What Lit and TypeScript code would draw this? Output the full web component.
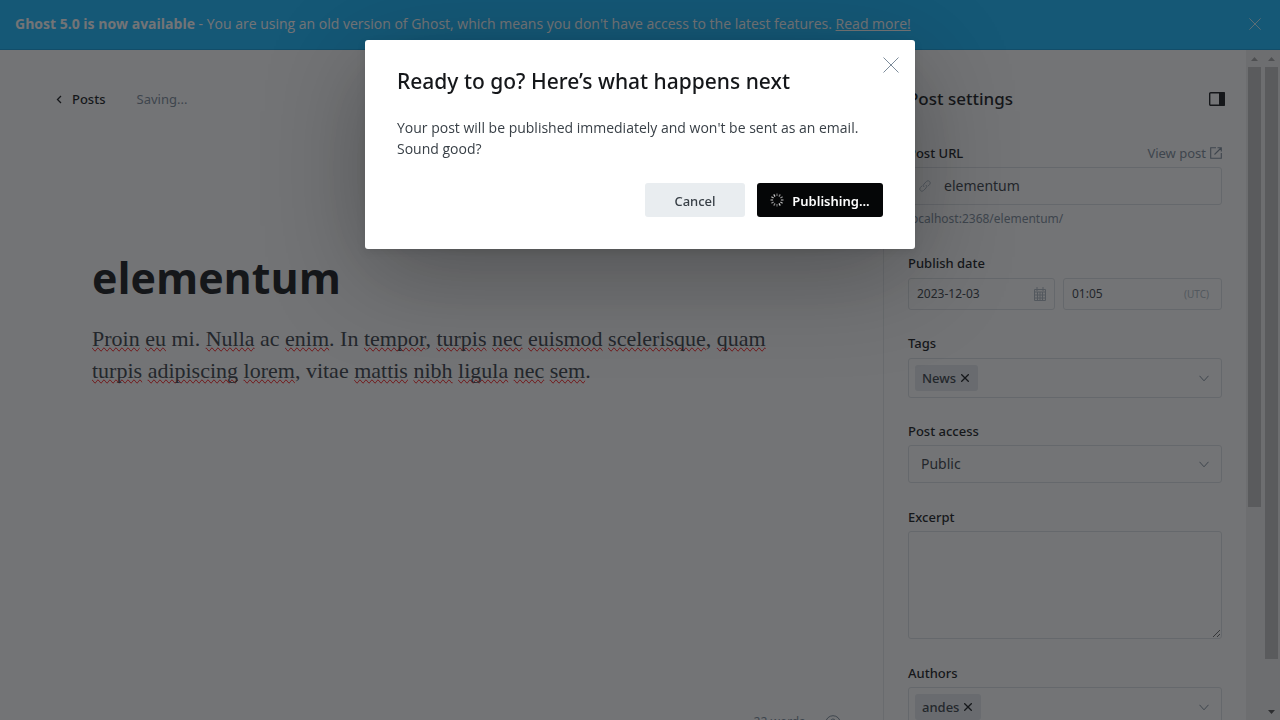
import { LitElement, html, css, svg } from "lit";
import { customElement, state } from "lit/decorators.js";

interface Run {
  text: string;
  flagged: boolean;
}

const run = (text: string, flagged = true): Run => ({ text, flagged });

const BODY: Run[] = [
  run("Proin"), run(" ", false), run("eu"), run(" mi. ", false), run("Nulla"), run(" ac ", false),
  run("enim"), run(". In ", false), run("tempor"), run(", ", false), run("turpis"), run(" ", false),
  run("nec"), run(" ", false), run("euismod"), run(" ", false), run("scelerisque"), run(", ", false),
  run("quam"), run(" ", false), run("turpis"), run(" ", false), run("adipiscing"), run(" ", false),
  run("lorem"), run(", vitae ", false), run("mattis"), run(" ", false), run("nibh"), run(" ", false),
  run("ligula"), run(" ", false), run("nec"), run(" ", false), run("sem"), run(".", false),
];

const crossIcon = html`<svg class="cross" viewBox="0 0 16 16" aria-hidden="true"><path d="M.5.5l15 15M15.5.5l-15 15" /></svg>`;
const chevronDown = html`<svg class="chevron-down" viewBox="0 0 10 7" aria-hidden="true"><path d="M.5.8L5 5.8 9.5.8" /></svg>`;

@customElement("app-root")
export class AppRoot extends LitElement {
  static styles = css`
    :host {
      display: flex;
      flex-direction: column;
      height: 100vh;
      overflow: hidden;
      background: #fff;
      color: #15171a;
      font: 14px/20px "Noto Sans", "Open Sans", sans-serif;
    }
    * { box-sizing: border-box; }
    svg { display: block; fill: none; stroke: currentColor; flex: none; }
    button, input, select, textarea { font: inherit; color: inherit; margin: 0; }
    button { border: 0; padding: 0; background: none; cursor: pointer; }

    .banner {
      display: flex;
      align-items: center;
      justify-content: space-between;
      flex: none;
      height: 50px;
      padding: 0 19px 2px 15px;
      background: #14b8ff;
      border-bottom: 1px solid #0d9fdf;
      color: #fff;
      font-family: "Open Sans", sans-serif;
      font-size: 14px;
    }
    .banner p { margin: 0; }
    .banner a { color: inherit; }
    .banner .cross { width: 12px; height: 12px; }

    .workspace { display: flex; flex: 1; min-height: 0; }
    .editor { display: flex; flex-direction: column; flex: 1; min-width: 0; }
    .editor-bar {
      display: flex;
      align-items: center;
      gap: 31px;
      height: 98px;
      padding: 0 56px;
      font-size: 13px;
      color: #7c8b9a;
      flex: none;
    }
    .back {
      display: flex;
      align-items: center;
      gap: 9px;
      color: #15171a;
      text-decoration: none;
      font-weight: 500;
    }
    .back svg { width: 7px; height: 9px; }
    .writing { flex: 1; padding: 96px 92px 0; min-height: 0; overflow: hidden; }
    .title { margin: 0 0 11px; font-family: "Open Sans", sans-serif; font-size: 43px; line-height: 68px; font-weight: 700; }
    .content {
      margin: 0;
      font: 22px/32px "Liberation Serif", serif;
      color: #394047;
    }
    .flagged { text-decoration-line: spelling-error; }
    .footer {
      display: flex;
      justify-content: flex-end;
      gap: 20px;
      height: 8px;
      padding-right: 42px;
      overflow: hidden;
      flex: none;
      font-size: 12px;
      color: #7c8b9a;
    }
    .footer svg { width: 16px; height: 16px; margin-top: 3px; }

    .settings {
      display: flex;
      flex-direction: column;
      width: 363px;
      flex: none;
      padding: 0 24px;
      border-left: 1px solid #e6e9eb;
      overflow: hidden;
    }
    .settings-head {
      display: flex;
      align-items: center;
      justify-content: space-between;
      flex: none;
      height: 93px;
      padding-top: 4px;
      margin-right: -3px;
    }
    .settings-head h2 { margin: 0; font-size: 17px; line-height: 24px; font-weight: 500; }
    .settings-head svg { width: 16px; height: 14px; }
    .field { display: flex; flex-direction: column; gap: 4px; margin-bottom: 24px; flex: none; }
    .field.loose { gap: 5px; margin-bottom: 23px; }
    .row { display: flex; justify-content: space-between; align-items: center; }
    .label { font-size: 13px; font-weight: 500; line-height: 20px; }
    .view { display: flex; align-items: center; gap: 4px; color: #7c8b9a; text-decoration: none; font-size: 13px; }
    .view svg { width: 12px; height: 12px; }
    .hint { margin: 0; font-size: 12px; color: #7c8b9a; }
    .box {
      display: flex;
      align-items: center;
      height: 38px;
      border: 1px solid #dde1e5;
      border-radius: 3px;
      color: #394047;
    }
    .box input, .box select {
      flex: 1;
      min-width: 0;
      width: 100%;
      border: 0;
      padding: 0;
      outline: 0;
      background: none;
      appearance: none;
    }
    .url { padding: 0 12px 0 10px; gap: 13px; }
    .url svg { width: 12px; height: 12px; color: #aebac4; }
    .dates { display: grid; grid-template-columns: 147fr 159fr; gap: 8px; }
    .dates .box { height: 32px; padding: 0 8px; font-size: 12px; }
    .dates .box svg { width: 12px; height: 14px; color: #aebac4; }
    .zone { font-size: 10px; color: #aebac4; padding-right: 4px; }
    .tokens { height: 40px; padding: 0 12px 0 6px; justify-content: space-between; }
    .token {
      display: flex;
      align-items: center;
      gap: 5px;
      height: 26px;
      padding: 0 9px 0 7px;
      border-radius: 3px;
      background: #e5e9ed;
      font-size: 13px;
      font-weight: 500;
    }
    .token .cross { width: 8px; height: 8px; stroke-width: 2.6; color: #15171a; }
    .chevron-down { width: 10px; height: 7px; color: #7c8b9a; }
    .choice { padding: 0 12px; }
    .area {
      display: block;
      height: 108px;
      border: 1px solid #dde1e5;
      border-radius: 3px;
      background: none;
      resize: vertical;
      outline: 0;
    }

    .scrollbar {
      display: flex;
      flex-direction: column;
      align-items: center;
      width: 17px;
      flex: none;
      background: #f1f1f1;
      color: #a3a3a3;
    }
    .scrollbar svg { width: 7px; height: 4px; margin: 7px 0 6px; fill: currentColor; stroke: none; }
    .thumb { width: 13px; background: #c1c1c1; flex: none; }
    .thumb.inner { height: 65.7%; }
    .thumb.outer { height: 88.4%; }
    .scrollbar .down { margin-top: auto; color: #505050; }

    .backdrop {
      position: fixed;
      inset: 0;
      display: flex;
      justify-content: center;
      align-items: flex-start;
      padding-top: 40px;
      background: rgba(21, 23, 26, 0.6);
    }
    .dialog {
      position: relative;
      width: 550px;
      max-width: 100%;
      padding: 25px 32px 32px;
      border-radius: 3px;
      background: #fff;
      box-shadow: 0 3px 8px rgba(0, 0, 0, 0.1), 0 24px 100px rgba(0, 0, 0, 0.3);
    }
    .dialog h1 { margin: 0 0 20px; font-size: 21px; line-height: 32px; font-weight: 500; }
    .dialog p { margin: 0 0 24px; font-family: "Open Sans", sans-serif; font-size: 14px; line-height: 21px; color: #394047; }
    .close { position: absolute; top: 17px; right: 16px; color: #7c8b9a; }
    .close .cross { width: 16px; height: 16px; }
    .actions { display: flex; justify-content: flex-end; gap: 12px; }
    .btn {
      display: flex;
      align-items: center;
      justify-content: center;
      height: 34px;
      min-width: 100px;
      padding-top: 2px;
      border-radius: 3px;
      background: #e9edf0;
      color: #394047;
      font-size: 13px;
      font-weight: 500;
    }
    .btn.primary { width: 126px; gap: 8px; background: #050607; color: #fff; font-weight: 600; }
    .btn svg { width: 14px; height: 14px; margin-bottom: 2px; }
  `;

  @state() private words = 22;

  private spinner() {
    return html`<svg viewBox="0 0 14 14" aria-hidden="true">
      ${Array.from({ length: 12 }, (_, i) => svg`<path d="M7 .5v2.6" stroke-width="1.2" opacity=${0.45 + (i % 6) * 0.07} transform="rotate(${i * 30} 7 7)" />`)}
    </svg>`;
  }

  private token(name: string) {
    return html`<span class="token">${name}<button aria-label="Remove ${name}">${crossIcon}</button></span>`;
  }

  private scrollbar(kind: string) {
    return html`<div class="scrollbar" aria-hidden="true">
      <svg viewBox="0 0 7 4"><path d="M0 4L3.5 0 7 4z" /></svg>
      <div class="thumb ${kind}"></div>
      ${kind === "outer" ? html`<svg class="down" viewBox="0 0 7 4"><path d="M0 0l3.5 4L7 0z" /></svg>` : null}
    </div>`;
  }

  render() {
    return html`
      <div class="banner">
        <p><strong>Ghost 5.0 is now available</strong> - You are using an old version of Ghost, which means you don't have access to the latest features. <a href="#">Read more!</a></p>
        <button aria-label="Dismiss">${crossIcon}</button>
      </div>
      <div class="workspace">
        <main class="editor">
          <div class="editor-bar">
            <a class="back" href="#"><svg viewBox="0 0 7 9" aria-hidden="true"><path d="M5 1L1.5 4.5 5 8" stroke-width="1.3" /></svg>Posts</a>
            <span>Saving...</span>
          </div>
          <article class="writing">
            <h1 class="title">elementum</h1>
            <p class="content">${BODY.map((r) => (r.flagged ? html`<span class="flagged">${r.text}</span>` : r.text))}</p>
          </article>
          <div class="footer">
            <span>${this.words} words</span>
            <svg viewBox="0 0 16 16" aria-hidden="true"><circle cx="8" cy="8" r="7.3" /><path d="M5.8 6.2a2.2 2.2 0 1 1 2.9 2.1c-.5.2-.7.5-.7 1.2M8 11v1.2" /></svg>
          </div>
        </main>
        <aside class="settings">
          <div class="settings-head">
            <h2>Post settings</h2>
            <button aria-label="Toggle settings"><svg viewBox="0 0 16 14"><rect x=".7" y=".7" width="14.6" height="12.6" rx="1" stroke-width="1.4" /><path d="M10 0h5a1 1 0 0 1 1 1v12a1 1 0 0 1-1 1h-5z" fill="currentColor" stroke="none" /></svg></button>
          </div>
          <div class="field">
            <div class="row">
              <label class="label" for="url">Post URL</label>
              <a class="view" href="#">View post<svg viewBox="0 0 12 12" aria-hidden="true"><path d="M6 .7H.7v10.6h10.6V6M4.5 7.5L11 1M7.5.7h3.8v3.8" stroke-width="1.1" /></svg></a>
            </div>
            <div class="box url">
              <svg viewBox="0 0 12 12" aria-hidden="true"><path d="M5 7a2.2 2.2 0 0 1 0-3L7.6 1.3a2.2 2.2 0 0 1 3.1 3.1L8.8 6.3M7 5a2.2 2.2 0 0 1 0 3L4.4 10.7a2.2 2.2 0 0 1-3.1-3.1L3.2 5.7" /></svg>
              <input id="url" .value=${"elementum"} />
            </div>
            <p class="hint">localhost:2368/elementum/</p>
          </div>
          <div class="field loose">
            <label class="label" for="date">Publish date</label>
            <div class="dates">
              <div class="box">
                <input id="date" .value=${"2023-12-03"} />
                <svg viewBox="0 0 12 14" aria-hidden="true"><path d="M.5 2.5h11v11H.5zM.5 5h11M.5 8h11M.5 11h11M3.5 5v8.5M6 5v8.5M8.5 5v8.5M3 0v4M9 0v4" /></svg>
              </div>
              <div class="box">
                <input aria-label="Publish time" .value=${"01:05"} />
                <span class="zone">(UTC)</span>
              </div>
            </div>
          </div>
          <div class="field loose">
            <span class="label">Tags</span>
            <div class="box tokens">${this.token("News")}${chevronDown}</div>
          </div>
          <div class="field">
            <label class="label" for="access">Post access</label>
            <div class="box choice">
              <select id="access"><option>Public</option></select>
              ${chevronDown}
            </div>
          </div>
          <div class="field">
            <label class="label" for="excerpt">Excerpt</label>
            <textarea class="area" id="excerpt"></textarea>
          </div>
          <div class="field">
            <span class="label">Authors</span>
            <div class="box tokens">${this.token("andes")}${chevronDown}</div>
          </div>
        </aside>
        ${this.scrollbar("inner")}${this.scrollbar("outer")}
      </div>
      <div class="backdrop">
        <section class="dialog" role="dialog" aria-modal="true" aria-labelledby="dialog-title">
          <button class="close" aria-label="Close">${crossIcon}</button>
          <h1 id="dialog-title">Ready to go? Here’s what happens next</h1>
          <p>Your post will be published immediately and won't be sent as an email. Sound good?</p>
          <div class="actions">
            <button class="btn">Cancel</button>
            <button class="btn primary">${this.spinner()}Publishing...</button>
          </div>
        </section>
      </div>
    `;
  }
}
